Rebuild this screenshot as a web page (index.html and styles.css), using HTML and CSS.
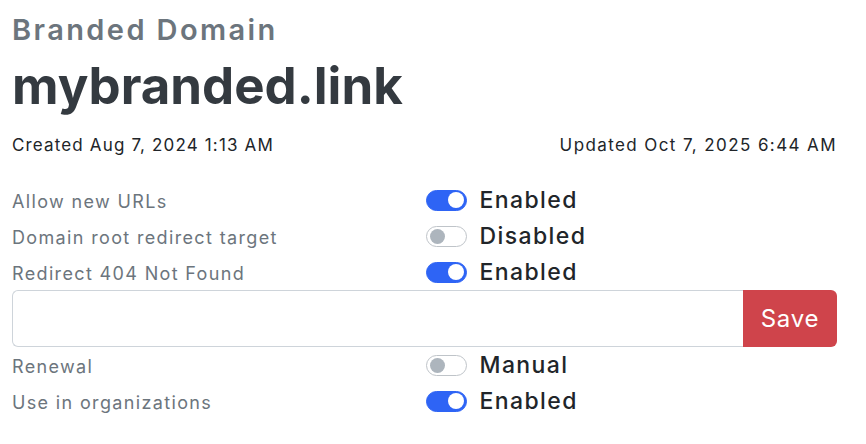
FILE: index.html
```html
<!DOCTYPE html>
<html>
<head>
<meta charset="utf-8">
<link rel="stylesheet" href="styles.css">
</head>
<body>
<div class="page">
  <div class="subtitle">Branded Domain</div>
  <h1 class="title">mybranded.link</h1>
  <div class="meta">
    <span>Created Aug 7, 2024 1:13 AM</span>
    <span class="updated">Updated Oct 7, 2025 6:44 AM</span>
  </div>
  <div class="settings">
    <div class="row">
      <div class="label">Allow new URLs</div>
      <div class="value"><span class="switch on"></span><span class="state">Enabled</span></div>
    </div>
    <div class="row">
      <div class="label">Domain root redirect target</div>
      <div class="value"><span class="switch"></span><span class="state">Disabled</span></div>
    </div>
    <div class="row">
      <div class="label">Redirect 404 Not Found</div>
      <div class="value"><span class="switch on"></span><span class="state">Enabled</span></div>
    </div>
    <div class="input-group">
      <input class="field" type="text">
      <button class="save">Save</button>
    </div>
    <div class="row">
      <div class="label">Renewal</div>
      <div class="value"><span class="switch"></span><span class="state">Manual</span></div>
    </div>
    <div class="row">
      <div class="label">Use in organizations</div>
      <div class="value"><span class="switch on"></span><span class="state">Enabled</span></div>
    </div>
  </div>
</div>
</body>
</html>
```
FILE: styles.css
```css
* { box-sizing: border-box; }
body {
  margin: 0;
  font-family: Inter, "Liberation Sans", sans-serif;
  color: #212529;
  background: #fff;
}
.page {
  padding: 13px 29px 0 12px;
}
.subtitle {
  font-size: 29px;
  font-weight: 600;
  letter-spacing: 2.4px;
  color: #6c757d;
  line-height: 34px;
}
.title {
  margin: 9px 0 0;
  font-size: 51px;
  font-weight: 700;
  color: #343a40;
  line-height: 60px;
}
.meta {
  display: flex;
  justify-content: space-between;
  font-size: 17px;
  letter-spacing: 1.15px;
  line-height: 24px;
  margin-top: 17px;
}
.updated {
  letter-spacing: 1.4px;
}
.settings {
  margin-top: 25px;
}
.row {
  display: grid;
  grid-template-columns: 1fr 1fr;
  align-items: center;
  height: 36px;
}
.label {
  font-size: 18px;
  letter-spacing: 1.35px;
  color: #6c757d;
  padding-top: 3px;
}
.value {
  display: flex;
  align-items: center;
  padding-left: 1px;
}
.switch {
  position: relative;
  width: 41px;
  height: 21px;
  border-radius: 11px;
  border: 1px solid #bfc4c9;
  background: #fff;
  flex: none;
}
.switch::after {
  content: "";
  position: absolute;
  top: 2px;
  left: 3px;
  width: 15px;
  height: 15px;
  border-radius: 50%;
  background: #adb5bd;
}
.switch.on {
  background: #2e64f5;
  border-color: #2e64f5;
}
.switch.on::after {
  left: auto;
  right: 2px;
  top: 1.5px;
  width: 16px;
  height: 16px;
  background: #fff;
}
.state {
  margin-left: 13px;
  font-size: 23px;
  font-weight: 500;
  letter-spacing: 1.4px;
  color: #212529;
}
.input-group {
  display: flex;
  height: 57px;
}
.field {
  flex: 1;
  border: 1px solid #ced4da;
  border-radius: 6px 0 0 6px;
  border-right: none;
  font-size: 20px;
  padding: 0 16px;
  outline: none;
}
.save {
  width: 94px;
  border: none;
  border-radius: 0 6px 6px 0;
  background: #cf444b;
  color: #fff;
  font-family: inherit;
  font-size: 24px;
  font-weight: 400;
  letter-spacing: 0.8px;
}
```
